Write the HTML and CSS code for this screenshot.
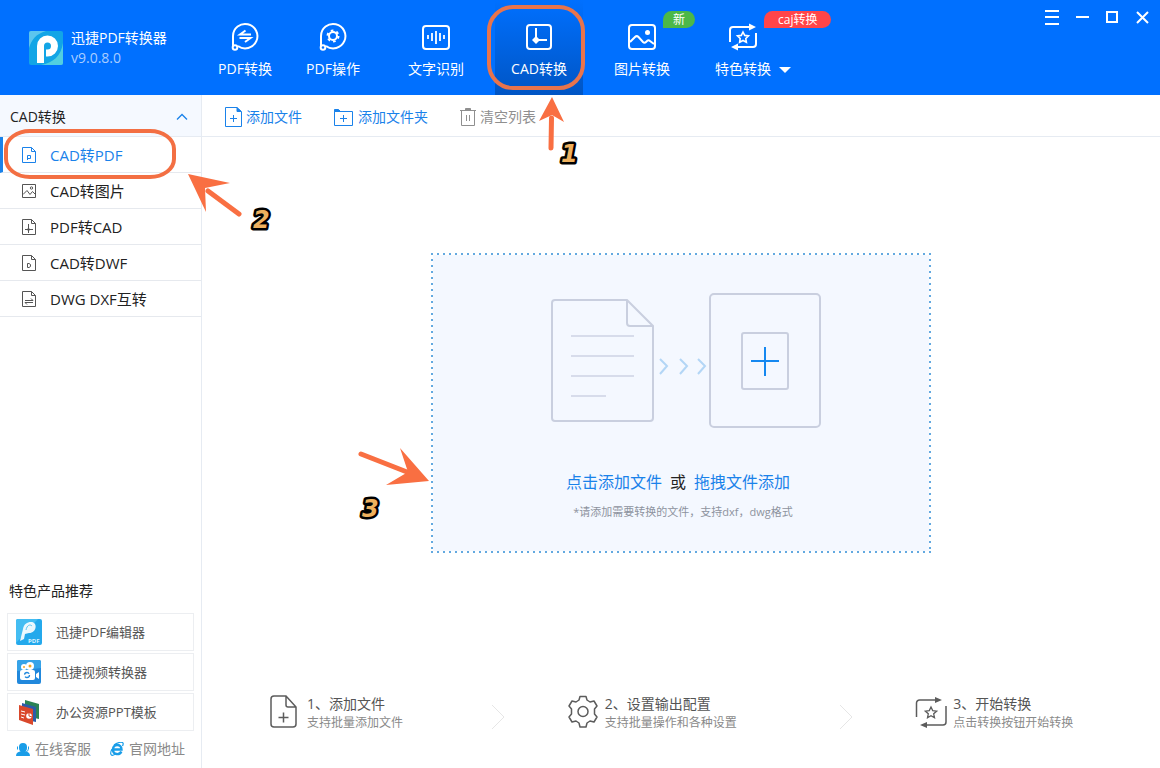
FILE: index.html
```html
<!DOCTYPE html>
<html lang="zh-CN">
  <head>
    <meta charset="UTF-8" />
    <meta name="viewport" content="width=device-width, initial-scale=1.0" />
    <title>迅捷PDF转换器</title>
    <link rel="stylesheet" href="styles.css">
  </head>
  <body>
    <header class="header">
      <div class="brand">
        <svg class="brand-logo" width="34" height="34" viewBox="0 0 34 34">
          <rect width="34" height="34" rx="2" fill="#12a5e6" />
          <path d="M0 17V2a2 2 0 0 1 2-2h15C7 3 3 8 0 17z" fill="#5cc5ee" />
          <path d="M34 12v20a2 2 0 0 1-2 2H12c12-2 20-9 22-22z" fill="#52cfe0" />
          <path d="M11.500 32V15a7 7 0 1 1 7 7H17" fill="none" stroke="#fff" stroke-width="7" />
        </svg>
        <div class="brand-text">
          <span>迅捷PDF转换器</span>
          <span class="version">v9.0.8.0</span>
        </div>
      </div>

      <nav class="tabs">
        <div class="tab-item">
          <button class="tab">
            <svg width="30" height="30" viewBox="0 0 30 30" fill="none" stroke="#fff" stroke-width="2">
              <path d="M3 24V14a12.200 12.200 0 1 1 5 10" />
              <circle cx="5" cy="25.500" r="2.300" />
              <path d="M21 12.500H10L15.500 8.500M9.500 16H20.500L15 20" />
            </svg>
            <span>PDF转换</span>
          </button>
        </div>
        <div class="tab-item">
          <button class="tab">
            <svg width="30" height="30" viewBox="0 0 30 30" fill="none" stroke="#fff" stroke-width="2">
              <path d="M3 24V14a12.200 12.200 0 1 1 5 10" />
              <circle cx="5" cy="25.500" r="2.300" />
              <circle cx="15" cy="14" r="4" />
              <circle cx="15" cy="14" r="5.500" stroke-dasharray="2.600 3.160" />
            </svg>
            <span>PDF操作</span>
          </button>
        </div>
        <div class="tab-item spaced">
          <button class="tab">
            <svg width="30" height="30" viewBox="0 0 30 30" fill="none" stroke="#fff" stroke-width="2">
              <rect x="2" y="4" width="26" height="23" rx="3" />
              <path d="M7 13v4M11 11v8M15 9v13M19 11v8M23 13v4" stroke-width="1.800" />
            </svg>
            <span>文字识别</span>
          </button>
        </div>
        <div class="tab-item spaced">
          <button class="tab active">
            <svg width="30" height="30" viewBox="0 0 30 30" fill="none" stroke="#fff" stroke-width="2">
              <rect x="3" y="3" width="24" height="24" rx="3" />
              <path d="M12 6v12h11" />
              <path d="M12 14l4 4-4 4-4-4z" fill="#fff" stroke="none" />
            </svg>
            <span>CAD转换</span>
          </button>
          <svg class="mark mark-tab" width="98" height="170" viewBox="0 0 98 170">
            <rect x="2" y="7" width="94" height="81" rx="24" fill="none" stroke="#e8744c" stroke-width="4" />
            <path d="M64.500 118L64 148" stroke="#f96f42" stroke-width="5" stroke-linecap="round" />
            <path d="M65 97l12 25-12-7-13 6z" fill="#f96f42" />
            <text class="mark-number" x="74" y="162">1</text>
          </svg>
        </div>
        <div class="tab-item spaced">
          <button class="tab">
            <svg width="30" height="30" viewBox="0 0 30 30" fill="none" stroke="#fff" stroke-width="2">
              <rect x="2" y="3" width="26" height="24" rx="3" />
              <path d="M3 20l5-5c1.500-1.500 2.500-1 3.500 0l4.500 5c1 1 2 1 3 0l1-1c1-1 2-1 3 0l4 3" />
              <circle cx="20.500" cy="10.500" r="2.500" fill="#fff" stroke="none" />
            </svg>
            <span>图片转换</span>
          </button>
          <span class="badge badge-new">新</span>
        </div>
        <div class="tab-item featured">
          <button class="tab">
            <svg width="30" height="30" viewBox="0 0 30 30" fill="none" stroke="#fff" stroke-width="2">
              <path d="M2 20V8a3 3 0 0 1 3-3h17M28 11v11a3 3 0 0 1-3 3H9" />
              <path d="M21 1.500l7 3.500-7 3.500zM10 21.500L3 25l7 3.500z" fill="#fff" stroke="none" />
              <path d="M15 10l1.700 3.400 3.800.500-2.700 2.600.600 3.800L15 18.500l-3.400 1.800.600-3.800-2.700-2.600 3.800-.500z" stroke-width="1.600" />
            </svg>
            <span class="with-caret">特色转换</span>
          </button>
          <span class="badge badge-caj">caj转换</span>
        </div>
      </nav>

      <div class="window-controls">
        <button aria-label="菜单"><svg width="14" height="16" viewBox="0 0 14 16"><path d="M0 2h14M0 8h14M0 15h14" /></svg></button>
        <button aria-label="最小化"><svg width="14" height="16" viewBox="0 0 14 16"><path d="M1 8h13" /></svg></button>
        <button aria-label="最大化"><svg width="14" height="16" viewBox="0 0 14 16"><path d="M2 3h10v10H2z" /></svg></button>
        <button aria-label="关闭"><svg width="14" height="16" viewBox="0 0 14 16"><path d="M2 3l11 11M13 3L2 14" /></svg></button>
      </div>
    </header>

    <div class="body">
      <aside class="sidebar">
        <button class="group">
          <span>CAD转换</span>
          <svg width="12" height="8" viewBox="0 0 12 8" fill="none" stroke="#1a82ea" stroke-width="1.300"><path d="M1 6.500l5-5 5 5" /></svg>
        </button>
        <ul class="menu">
          <li>
            <a class="menu-link active" href="#">
              <svg class="menu-icon" viewBox="0 0 16 18"><path d="M1.500 1.500h9l4 4v11h-13zM10.500 1.500v4h4M6.500 14V9.500h3v3h-3" /></svg>
              CAD转PDF
            </a>
            <svg class="mark mark-menu" width="280" height="110" viewBox="0 0 280 110">
              <rect x="6" y="3" width="168" height="46" rx="24" ry="18" fill="none" stroke="#f36f43" stroke-width="4" />
              <path d="M208 63l31 23" stroke="#f96f42" stroke-width="5" stroke-linecap="round" />
              <path d="M188 46l42 9-25 5 1 24z" fill="#f96f42" />
              <text class="mark-number" x="253" y="100">2</text>
            </svg>
          </li>
          <li>
            <a class="menu-link" href="#">
              <svg class="menu-icon" viewBox="0 0 16 18"><path d="M1.500 2.500h13v13h-13zM2 12.500l4-4 3 4 2.500-3 3 3" /><circle cx="10.500" cy="6" r="1.200" /></svg>
              CAD转图片
            </a>
          </li>
          <li>
            <a class="menu-link" href="#">
              <svg class="menu-icon" viewBox="0 0 16 18"><path d="M1.500 1.500h9l4 4v11h-13zM10.500 1.500v4h4M7.500 6v9M4 11.500h8" /><circle cx="7.500" cy="11.500" r="1" /></svg>
              PDF转CAD
            </a>
          </li>
          <li>
            <a class="menu-link" href="#">
              <svg class="menu-icon" viewBox="0 0 16 18"><path d="M1.500 1.500h9l4 4v11h-13zM10.500 1.500v4h4M6.500 9.500v4H8l1.500-1v-2l-1.500-1z" /></svg>
              CAD转DWF
            </a>
          </li>
          <li>
            <a class="menu-link" href="#">
              <svg class="menu-icon" viewBox="0 0 16 18"><path d="M1.500 1.500h9l4 4v11h-13zM10.500 1.500v4h4M4 10.500h8l-2-2M12 12.500H4l2 2" /></svg>
              DWG DXF互转
            </a>
          </li>
        </ul>

        <section class="products">
          <h2>特色产品推荐</h2>
          <a class="product" href="#">
            <svg width="26" height="26" viewBox="0 0 26 26">
              <rect width="26" height="26" rx="2" fill="#24a9ec" />
              <path d="M0 24V2a2 2 0 0 1 2-2h20z" fill="#44bdf2" />
              <path d="M4 22l3-12c1-5 4-7 8-7 7 0 6 11-2 11l-4 1-1 5z" fill="#fff" opacity=".9" />
              <path d="M10 11c1-5 4-6 6-4" fill="none" stroke="#5cc5f3" />
              <text x="12" y="24" fill="#d9f2ff" font-size="6" font-weight="bold">PDF</text>
            </svg>
            迅捷PDF编辑器
          </a>
          <a class="product" href="#">
            <svg width="26" height="26" viewBox="0 0 26 26">
              <rect x="1" y="1" width="24" height="24" rx="2" fill="#2188dc" />
              <path d="M1 12V3a2 2 0 0 1 2-2h20a2 2 0 0 1 2 2v6z" fill="#36a3e8" />
              <rect x="4" y="11" width="15" height="10" rx="2" fill="#fff" />
              <path d="M20 15l3-2v7l-3-2z" fill="#fff" />
              <circle cx="8" cy="8" r="3" fill="#fff" />
              <circle cx="14" cy="7" r="4" fill="#fff" />
              <circle cx="8" cy="8" r="1" fill="#f5a623" />
              <circle cx="14" cy="7" r="1.500" fill="#f5a623" />
              <circle cx="11" cy="16" r="2.500" fill="none" stroke="#2188dc" stroke-width="1.300" stroke-dasharray="6 2" />
            </svg>
            迅捷视频转换器
          </a>
          <a class="product" href="#">
            <svg width="26" height="26" viewBox="0 0 26 26">
              <path d="M9 1l14 4v15l-14-3z" fill="#2b8354" />
              <path d="M6 4l14 4v15L6 20z" fill="#2b5ca8" />
              <path d="M3 6l14 4v16L3 21z" fill="#d9482b" />
              <path d="M5 12l4 1M5 15l4 1M5 18l3 1" stroke="#fff" />
              <circle cx="13" cy="17" r="2.800" fill="#fff" />
              <path d="M13 17v-3M13 17l3 1" stroke="#d9482b" />
            </svg>
            办公资源PPT模板
          </a>
          <div class="side-links">
            <a href="#">
              <svg width="14" height="14" viewBox="0 0 14 14" fill="#199de8">
                <path d="M3 5a4 4 0 0 1 8 0v1a4 4 0 0 1-8 0zM0 14c0-3 2-4 4-4.500h6c2 .500 4 1.500 4 4.500z" />
                <path d="M1.500 4.500v3M12.500 4.500v3M12 7.500c0 2-2 3-4 3" stroke="#199de8" fill="none" />
              </svg>
              在线客服
            </a>
            <a href="#">
              <svg width="14" height="14" viewBox="0 0 14 14" fill="none" stroke="#199de8">
                <path d="M3 7.500h8.500c0-6-8.500-6-8.500 0s7 5.500 8.300 2" stroke-width="2.400" />
                <path d="M4 3C7 .500 12-.500 13 1c.500.800 0 2-.500 3M2 7c-2 4-1.500 6 0 6.300 1 .200 2-.300 3-1" stroke-width="1.200" />
              </svg>
              官网地址
            </a>
          </div>
        </section>
      </aside>

      <main class="content">
        <div class="toolbar">
          <button class="tool">
            <svg width="18" height="20" viewBox="0 0 18 20" fill="none" stroke="#1a82ea">
              <path d="M12 .500H.500v19h16V5M5 11.500h7M8.500 8v7" />
              <path d="M12 .500v4h4.500z" fill="#1a82ea" />
            </svg>
            添加文件
          </button>
          <button class="tool tool-folder">
            <svg width="20" height="20" viewBox="0 0 20 20" fill="none" stroke="#1a82ea">
              <path d="M.500 4.500h18v14H.500zM6 11.500h7M9.500 8v7" />
              <path d="M.500 4.500v-2h4l2 2z" fill="#1a82ea" />
            </svg>
            添加文件夹
          </button>
          <button class="tool tool-clear">
            <svg width="16" height="20" viewBox="0 0 16 20" fill="none" stroke="#8f8f8f">
              <path d="M0 3.500h16M1.500 3.500v15h13v-15M6.500 8v6M9.500 8v6" />
              <path d="M5.500 1.500h5v2h-5z" fill="#8f8f8f" />
            </svg>
            清空列表
          </button>
        </div>

        <div class="workspace">
          <div class="drop-zone">
            <svg width="272" height="138" viewBox="0 0 272 138" fill="none" stroke="#c9cfdf" stroke-width="2">
              <path d="M78 8H6a3 3 0 0 0-3 3v115a3 3 0 0 0 3 3h95a3 3 0 0 0 3-3V34zM78 8v23a3 3 0 0 0 3 3h23" />
              <path d="M22 44h63M22 64h63M22 84h63M22 104h35" stroke="#d7dceb" />
              <path d="M111 67l7 7-7 8M131 67l7 7-7 8M149 67l7 7-7 8" stroke="#b3d6f6" />
              <rect x="161" y="2" width="110" height="133" rx="4" />
              <rect x="193" y="41" width="46" height="56" rx="2" />
              <path d="M202 69h28M216 55v29" stroke="#1588f0" />
            </svg>
            <p class="drop-text"><a href="#">点击添加文件</a><span>或</span><a href="#">拖拽文件添加</a></p>
            <p class="drop-hint">*请添加需要转换的文件，支持dxf，dwg格式</p>
            <svg class="mark mark-drop" width="76" height="80" viewBox="0 0 76 80">
              <path d="M6 8l46 18" stroke="#f96f42" stroke-width="5" stroke-linecap="round" />
              <path d="M74 35L45 2l8 24-22 13z" fill="#f96f42" />
              <text class="mark-number" x="7" y="71">3</text>
            </svg>
          </div>
        </div>

        <ol class="steps">
          <li class="step">
            <svg width="32" height="36" viewBox="0 0 32 36" fill="none" stroke="#5c5c5c" stroke-width="1.500">
              <path d="M17 2H5a3 3 0 0 0-3 3v25a3 3 0 0 0 3 3h19a3 3 0 0 0 3-3V13zM17 2v9a2 2 0 0 0 2 2h8M9.500 23.500h10M14.500 18.500v10" />
            </svg>
            <div>
              <h3>1、添加文件</h3>
              <p>支持批量添加文件</p>
            </div>
            <svg class="step-next" width="14" height="26" viewBox="0 0 14 26"><path d="M1 1l12 12L1 25" /></svg>
          </li>
          <li class="step">
            <svg width="32" height="36" viewBox="0 0 32 36" fill="none" stroke="#5c5c5c" stroke-width="1.500" stroke-linejoin="round">
              <path d="M12 6l1-3.500h6L20 6l3 2 4-1 3 5-2.500 3v5l2.500 3-3 5-4-1-3 2-1 4h-6l-1-4-3-2-4 1-3-5L4.500 20v-5L2 12l3-5 4 1z" />
              <circle cx="16" cy="17.500" r="5" />
            </svg>
            <div>
              <h3>2、设置输出配置</h3>
              <p>支持批量操作和各种设置</p>
            </div>
            <svg class="step-next" width="14" height="26" viewBox="0 0 14 26"><path d="M1 1l12 12L1 25" /></svg>
          </li>
          <li class="step">
            <svg width="32" height="36" viewBox="0 0 32 36" fill="none" stroke="#5c5c5c" stroke-width="1.500">
              <path d="M1.500 23V9a3 3 0 0 1 3-3H22M31 12v16a3 3 0 0 1-3 3H10" />
              <path d="M20 3l7 3-7 3zM12 28l-7 3 7 3z" fill="#5c5c5c" stroke="none" />
              <path d="M16 13l1.700 3.600 4 .500-3 2.700.800 4L16 21.800l-3.500 2 .800-4-3-2.700 4-.500z" stroke-width="1.300" />
            </svg>
            <div>
              <h3>3、开始转换</h3>
              <p>点击转换按钮开始转换</p>
            </div>
          </li>
        </ol>
      </main>
    </div>
  </body>
</html>
```
FILE: styles.css
```css
* {
  box-sizing: border-box;
}

body {
  margin: 0;
  min-height: 100vh;
  display: flex;
  flex-direction: column;
  font-family: "Open Sans", "Noto Sans CJK SC", sans-serif;
  font-size: 14px;
  line-height: 20px;
  color: #222;
  background-color: #fff;
}

button {
  font: inherit;
  color: inherit;
  background: none;
  border: none;
  padding: 0;
  cursor: pointer;
}

a {
  color: inherit;
  text-decoration: none;
}

h2,
h3,
p,
ul,
ol {
  margin: 0;
  padding: 0;
  font-size: inherit;
  font-weight: normal;
  list-style: none;
}

svg {
  display: block;
  flex-shrink: 0;
}

/* Header */
.header {
  display: flex;
  height: 95px;
  background-color: #0070ff;
  color: #fff;
}

.brand {
  display: flex;
  align-items: center;
  gap: 8px;
  width: 201px;
  padding-left: 29px;
}

.brand-text {
  display: flex;
  flex-direction: column;
}

.version {
  color: #a9cdff;
}

.tabs {
  display: flex;
}

.tab-item {
  position: relative;
  width: 88px;
}

.tab-item.spaced {
  margin-left: 15px;
}

.tab-item.featured {
  margin-left: 13px;
}

.tab {
  display: flex;
  flex-direction: column;
  align-items: center;
  gap: 7px;
  width: 100%;
  height: 100%;
  padding-top: 22px;
}

.tab.active {
  background: linear-gradient(#0070ff, #0055c4);
}

.with-caret {
  position: relative;
}

.with-caret::after {
  content: "";
  position: absolute;
  left: calc(100% + 8px);
  top: 8px;
  border: 6px solid transparent;
  border-top-color: #fff;
  border-bottom: none;
}

.badge {
  position: absolute;
  top: 11px;
  left: 65px;
  height: 17px;
  padding: 0 14px;
  border-radius: 9px 9px 9px 0;
  font-size: 12px;
  line-height: 17px;
  white-space: nowrap;
}

.badge-new {
  padding: 0 10px;
  background-color: #4cb848;
}

.badge-caj {
  background-color: #ff4549;
}

.window-controls {
  display: flex;
  gap: 16px;
  align-self: flex-start;
  margin-left: auto;
  padding: 9px 11px;
}

.window-controls svg {
  fill: none;
  stroke: #fff;
  stroke-width: 2;
}

/* Numbered tips drawn over the page */
.mark {
  position: absolute;
  z-index: 2;
  overflow: visible;
  pointer-events: none;
}

.mark-tab {
  left: -8px;
  top: 0;
}

.mark-menu {
  left: 0;
  top: -9px;
}

.mark-drop {
  right: 100%;
  top: 193px;
}

.mark-number {
  font-family: "DejaVu Sans", sans-serif;
  font-size: 24px;
  font-weight: bold;
  font-style: italic;
  fill: #efb15e;
  stroke: #000;
  stroke-width: 5px;
  stroke-linejoin: round;
  paint-order: stroke;
}

.body {
  display: flex;
  flex: 1;
}

/* Sidebar */
.sidebar {
  display: flex;
  flex-direction: column;
  width: 202px;
  border-right: 1px solid #e6ebf2;
}

.group {
  display: flex;
  align-items: center;
  justify-content: space-between;
  height: 42px;
  padding: 2px 13px 0 10px;
  background-color: #f5f9ff;
  border-bottom: 1px solid #e6ebf2;
}

.menu li {
  position: relative;
}

.menu-link {
  display: flex;
  align-items: center;
  gap: 13px;
  height: 36px;
  padding-left: 21px;
  border-bottom: 1px solid #e6e9ee;
  font-size: 15px;
}

.menu-link.active {
  padding-left: 18px;
  border-left: 3px solid #1a82ea;
  color: #1a82ea;
}

.menu-icon {
  width: 16px;
  height: 18px;
  fill: none;
  stroke: #555;
}

.active .menu-icon {
  stroke: #1a82ea;
}

.products {
  display: flex;
  flex-direction: column;
  gap: 2px;
  margin-top: auto;
  padding: 0 7px 9px;
}

.products h2 {
  margin-bottom: 10px;
  padding-left: 2px;
}

.product {
  display: flex;
  align-items: center;
  gap: 14px;
  height: 38px;
  padding-left: 8px;
  border: 1px solid #eceef1;
  font-size: 13px;
  color: #555;
}

.side-links {
  display: flex;
  justify-content: space-between;
  margin-top: 6px;
  padding: 0 9px;
  color: #8a8a8a;
}

.side-links a {
  display: flex;
  align-items: center;
  gap: 5px;
}

/* Content */
.content {
  display: flex;
  flex: 1;
  flex-direction: column;
}

.toolbar {
  display: flex;
  height: 42px;
  padding: 2px 0 0 23px;
  border-bottom: 1px solid #e6ebf2;
}

.tool {
  display: flex;
  align-items: center;
  gap: 3px;
  margin-right: 32px;
  color: #1a82ea;
}

.tool-folder {
  gap: 4px;
}

.tool-clear {
  gap: 4px;
  color: #8f8f8f;
}

.workspace {
  display: flex;
  flex: 1;
  align-items: center;
  justify-content: center;
}

/* the dots sit 6px apart, wider than border-style: dotted gives */
.drop-zone {
  position: relative;
  display: flex;
  flex-direction: column;
  align-items: center;
  width: 500px;
  height: 300px;
  padding-top: 39px;
  background:
    repeating-linear-gradient(to right, #63a9e0 0 2px, #fff 2px 6px) top / 100% 2px no-repeat,
    repeating-linear-gradient(to right, #63a9e0 0 2px, #fff 2px 6px) bottom / 100% 2px no-repeat,
    repeating-linear-gradient(to bottom, #63a9e0 0 2px, #fff 2px 6px) left / 2px 100% no-repeat,
    repeating-linear-gradient(to bottom, #63a9e0 0 2px, #fff 2px 6px) right / 2px 100% no-repeat,
    #f4f8ff;
}

.drop-zone > svg:first-child {
  margin-left: 8px;
}

.drop-text {
  display: flex;
  gap: 8px;
  margin-top: 42px;
  margin-right: 6px;
  font-size: 16px;
}

.drop-text a {
  color: #1a82ea;
}

.drop-hint {
  margin-top: 10px;
  padding-left: 4px;
  font-size: 11px;
  color: #8d939e;
}

/* Steps */
.steps {
  display: grid;
  grid-template-columns: 298fr 349fr 245fr;
  height: 99px;
  padding: 25px 0 0 67px;
}

.step {
  display: flex;
  align-items: flex-start;
  gap: 6px;
}

.step h3 {
  color: #555;
}

.step p {
  font-size: 12px;
  line-height: 18px;
  color: #8a8a8a;
}

.step-next {
  align-self: flex-start;
  margin: 10px 62px 0 auto;
  fill: none;
  stroke: #e6e6e6;
}
```
